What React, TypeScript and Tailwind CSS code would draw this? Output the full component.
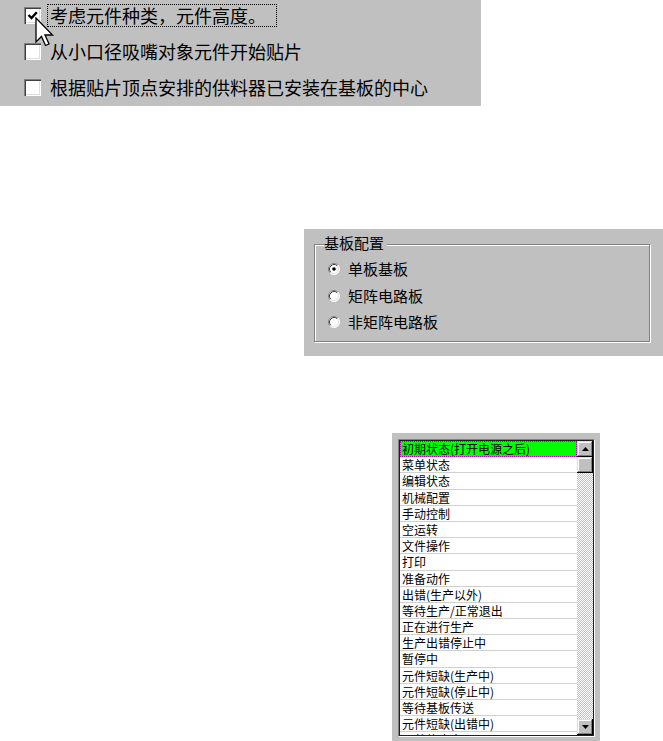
import React from "react";

const raised =
  "bg-[#c0c0c0] shadow-[inset_-1px_-1px_0_#000,inset_1px_1px_0_#dfdfdf,inset_-2px_-2px_0_#808080,inset_2px_2px_0_#fff]";

function CheckBox({ checked }: { checked?: boolean }) {
  return (
    <div className="w-[17px] h-[17px] shrink-0 bg-white shadow-[inset_1px_1px_0_#808080,inset_2px_2px_0_#404040,inset_-1px_-1px_0_#fff,inset_-2px_-2px_0_#dfdfdf] flex items-center justify-center">
      {checked && (
        <svg width="17" height="17" viewBox="0 0 17 17">
          <path d="M4.5 8 L7.5 11 L12.8 5.2" fill="none" stroke="#000" strokeWidth="2.4" />
        </svg>
      )}
    </div>
  );
}

function Radio({ checked }: { checked?: boolean }) {
  return (
    <svg width="12" height="12" viewBox="0 0 12 12" className="shrink-0">
      <circle cx="6" cy="6" r="5.5" fill="#fff" />
      <path d="M2.11 9.89 A5.5 5.5 0 0 1 9.89 2.11" fill="none" stroke="#808080" strokeWidth="1" />
      <path d="M9.89 2.11 A5.5 5.5 0 0 1 2.11 9.89" fill="none" stroke="#fff" strokeWidth="1" />
      <path d="M2.82 9.18 A4.5 4.5 0 0 1 9.18 2.82" fill="none" stroke="#404040" strokeWidth="1" />
      <path d="M9.18 2.82 A4.5 4.5 0 0 1 2.82 9.18" fill="none" stroke="#dfdfdf" strokeWidth="1" />
      {checked && <circle cx="6" cy="6" r="1.8" fill="#000" />}
    </svg>
  );
}

const items = [
  "初期状态(打开电源之后)",
  "菜单状态",
  "编辑状态",
  "机械配置",
  "手动控制",
  "空运转",
  "文件操作",
  "打印",
  "准备动作",
  "出错(生产以外)",
  "等待生产/正常退出",
  "正在进行生产",
  "生产出错停止中",
  "暂停中",
  "元件短缺(生产中)",
  "元件短缺(停止中)",
  "等待基板传送",
  "元件短缺(出错中)",
  "吸着停止中",
];

export default function App() {
  return (
    <div className="w-[663px] h-[741px] bg-white overflow-hidden font-['Noto_Sans_CJK_SC','Liberation_Sans',sans-serif] text-black flex flex-col">
      {/* Top checkbox panel */}
      <div className="relative w-[481px] h-[106px] bg-[#c0c0c0] pl-[24px] flex flex-col gap-[6px] text-[18px]">
        <div className="h-[30px] flex items-center gap-[6px]">
          <CheckBox checked />
          <span className="border border-dotted border-black pl-[2px] pr-[10px] leading-[21px] whitespace-nowrap">
            考虑元件种类，元件高度。
          </span>
        </div>
        <div className="h-[30px] flex items-center gap-[6px]">
          <CheckBox />
          <span className="border border-transparent px-[2px] leading-[21px] whitespace-nowrap">
            从小口径吸嘴对象元件开始贴片
          </span>
        </div>
        <div className="h-[30px] flex items-center gap-[6px]">
          <CheckBox />
          <span className="border border-transparent px-[2px] leading-[21px] whitespace-nowrap">
            根据贴片顶点安排的供料器已安装在基板的中心
          </span>
        </div>
        {/* mouse cursor */}
        <svg
          className="absolute left-[35px] top-[17px]"
          width="20"
          height="32"
          viewBox="0 0 20 32"
        >
          <path
            d="M1 1 L1 25 L6.5 19.5 L10.5 28.5 L14 27 L10 18 L17.5 18 Z"
            fill="#fff"
            stroke="#000"
            strokeWidth="1.3"
            strokeLinejoin="miter"
          />
        </svg>
      </div>

      {/* Group box */}
      <div className="ml-[304px] mt-[123px] w-[359px] h-[127px] bg-[#c0c0c0] pl-[10px] pt-[15px]">
        <div className="relative w-[336px] h-[98px] border border-[#808080] shadow-[1px_1px_0_#fff,inset_1px_1px_0_#fff] pl-[13px] pt-[11px] flex flex-col text-[15px]">
          <span className="absolute left-[9px] top-[-11px] bg-[#c0c0c0] leading-[18px] pr-[3px]">
            基板配置
          </span>
          <div className="h-[26.5px] flex items-center gap-[8px]">
            <Radio checked />
            <span className="leading-[18px]">单板基板</span>
          </div>
          <div className="h-[26.5px] flex items-center gap-[8px]">
            <Radio />
            <span className="leading-[18px]">矩阵电路板</span>
          </div>
          <div className="h-[26.5px] flex items-center gap-[8px]">
            <Radio />
            <span className="leading-[18px]">非矩阵电路板</span>
          </div>
        </div>
      </div>

      {/* List box */}
      <div className="ml-[392px] mt-[77px] w-[208px] h-[308px] bg-[#c0c0c0] pl-[6px] pt-[6px]">
        <div className="w-[197px] h-[298px] border border-t-[#808080] border-l-[#808080] border-b-white border-r-white">
          <div className="w-full h-full border border-[#202020] flex">
            <div className="w-[177px] h-full overflow-hidden bg-white flex flex-col">
              {items.map((t, i) => (
                <div
                  key={t}
                  className={
                    i === 0
                      ? "h-[16.2px] shrink-0 bg-[#00ff00] outline outline-1 outline-dotted outline-[#c000c0] -outline-offset-1 pl-[2px] text-[12px] leading-[15px] whitespace-nowrap"
                      : "h-[16.2px] shrink-0 bg-white border-b border-[#d0d0d0] pl-[2px] text-[12px] leading-[15px] whitespace-nowrap"
                  }
                >
                  {t}
                </div>
              ))}
            </div>
            <div className="w-[16px] h-full flex flex-col">
              <div className={`w-[16px] h-[16px] shrink-0 flex items-center justify-center ${raised}`}>
                <svg width="7" height="4" viewBox="0 0 7 4">
                  <path d="M3.5 0 L7 4 L0 4 Z" fill="#000" />
                </svg>
              </div>
              <div className={`w-[16px] h-[16px] shrink-0 ${raised}`} />
              <div className="flex-1 bg-[repeating-conic-gradient(#c0c0c0_0_25%,#ffffff_0_50%)] bg-[length:2px_2px]" />
              <div className={`w-[16px] h-[16px] shrink-0 flex items-center justify-center ${raised}`}>
                <svg width="7" height="4" viewBox="0 0 7 4">
                  <path d="M0 0 L7 0 L3.5 4 Z" fill="#000" />
                </svg>
              </div>
            </div>
          </div>
        </div>
      </div>
    </div>
  );
}
